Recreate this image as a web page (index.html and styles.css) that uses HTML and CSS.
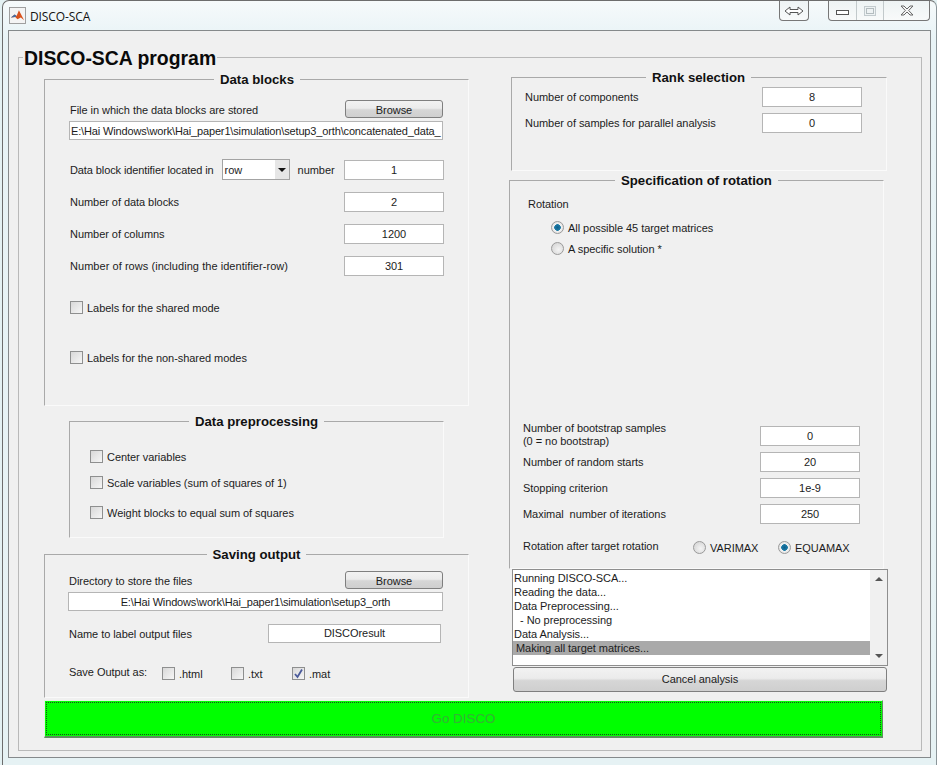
FILE: index.html
```html
<!DOCTYPE html>
<html>
<head>
    <title>DISCO-SCA</title>
    <link rel="stylesheet" href="styles.css">
</head>
<body>
<div class="window">
    <div class="titlebar">
        <svg class="app-icon" width="17" height="17" viewBox="0 0 18 18">
            <rect x="0.5" y="0.5" width="17" height="17" fill="#f4f4f4" stroke="#9a9a9a"/>
            <path d="M2 11 L6 8 L8 9.5 L10.5 3.5 L16 14 L12.5 11 L9 13 L6.5 10.5 Z" fill="#d9531e"/>
            <path d="M2 11 L6 8 L8 9.5 L6.5 10.5 Z" fill="#3f6fa8"/>
        </svg>
        <span class="app-name">DISCO-SCA</span>
        <div class="dock-btn">
            <svg width="20" height="10" viewBox="0 0 20 10"><path d="M1 5 L6 1 V3.5 H14 V1 L19 5 L14 9 V6.5 H6 V9 Z" fill="#fff" stroke="#555"/></svg>
        </div>
        <div class="caption-btns">
            <div class="cap cap-min"><span class="min-glyph"></span></div>
            <div class="cap cap-max"><span class="max-glyph"></span></div>
            <div class="cap cap-close">
                <svg width="14" height="11" viewBox="0 0 14 11"><path d="M1 1 H4 L7 4 L10 1 H13 L8.7 5.5 L13 10 H10 L7 7 L4 10 H1 L5.3 5.5 Z" fill="#f4f4f4" stroke="#666"/></svg>
            </div>
        </div>
    </div>

    <div class="client">
        <div class="main-panel">
            <div class="main-title">DISCO-SCA program</div>
            <div class="columns">
                <div class="col-left">
                    <div class="panel data-blocks">
                        <div class="panel-title">Data blocks</div>
                        <div class="row file-row">
                            <span class="grow low-label">File in which the data blocks are stored</span>
                            <div class="btn browse">Browse</div>
                        </div>
                        <div class="field field-left path">E:\Hai Windows\work\Hai_paper1\simulation\setup3_orth\concatenated_data_</div>
                        <div class="row id-row">
                            <span class="id-label">Data block identifier located in</span>
                            <div class="dropdown"><span>row</span><span class="drop-arrow"></span></div>
                            <span class="grow">number</span>
                            <div class="field num">1</div>
                        </div>
                        <div class="row gap-12">
                            <span class="grow">Number of data blocks</span>
                            <div class="field num">2</div>
                        </div>
                        <div class="row gap-12">
                            <span class="grow">Number of columns</span>
                            <div class="field num">1200</div>
                        </div>
                        <div class="row gap-12">
                            <span class="grow rows-label">Number of rows (including the identifier-row)</span>
                            <div class="field num">301</div>
                        </div>
                        <div class="check-row shared"><span class="check"></span><span>Labels for the shared mode</span></div>
                        <div class="check-row nonshared"><span class="check"></span><span>Labels for the non-shared modes</span></div>
                    </div>

                    <div class="panel preprocessing">
                        <div class="panel-title">Data preprocessing</div>
                        <div class="check-row pre-1"><span class="check"></span><span>Center variables</span></div>
                        <div class="check-row pre-2"><span class="check"></span><span>Scale variables (sum of squares of 1)</span></div>
                        <div class="check-row pre-3"><span class="check"></span><span>Weight blocks to equal sum of squares</span></div>
                    </div>

                    <div class="panel saving">
                        <div class="panel-title">Saving output</div>
                        <div class="row dir-row">
                            <span class="grow low-label">Directory to store the files</span>
                            <div class="btn browse">Browse</div>
                        </div>
                        <div class="field dir-path">E:\Hai Windows\work\Hai_paper1\simulation\setup3_orth</div>
                        <div class="row name-row">
                            <span class="grow">Name to label output files</span>
                            <div class="field name-field">DISCOresult</div>
                        </div>
                        <div class="row save-row">
                            <span class="save-label">Save Output as:</span>
                            <div class="check-row save-opt opt-html"><span class="check"></span><span>.html</span></div>
                            <div class="check-row save-opt opt-txt"><span class="check"></span><span>.txt</span></div>
                            <div class="check-row save-opt">
                                <span class="check">
                                    <svg width="11" height="11" viewBox="0 0 11 11"><path d="M2 6 L4.5 9 L9 1.5" fill="none" stroke="#4a5a9a" stroke-width="1.8"/></svg>
                                </span>
                                <span>.mat</span>
                            </div>
                        </div>
                    </div>
                </div>

                <div class="col-right">
                    <div class="panel rank">
                        <div class="panel-title">Rank selection</div>
                        <div class="row rank-1">
                            <span class="grow">Number of components</span>
                            <div class="field num">8</div>
                        </div>
                        <div class="row gap-6">
                            <span class="grow">Number of samples for parallel analysis</span>
                            <div class="field num">0</div>
                        </div>
                    </div>

                    <div class="panel rotation">
                        <div class="panel-title">Specification of rotation</div>
                        <div class="rotation-label">Rotation</div>
                        <div class="radio-row first"><span class="radio on"></span><span>All possible 45 target matrices</span></div>
                        <div class="radio-row second"><span class="radio"></span><span>A specific solution *</span></div>
                        <div class="row boot-row">
                            <span class="grow boot-label">Number of bootstrap samples<br>(0 = no bootstrap)</span>
                            <div class="field num">0</div>
                        </div>
                        <div class="row gap-6">
                            <span class="grow">Number of random starts</span>
                            <div class="field num">20</div>
                        </div>
                        <div class="row gap-6">
                            <span class="grow">Stopping criterion</span>
                            <div class="field num">1e-9</div>
                        </div>
                        <div class="row gap-6">
                            <span class="grow">Maximal&nbsp; number of iterations</span>
                            <div class="field num">250</div>
                        </div>
                        <div class="row after-row">
                            <span class="after-label">Rotation after target rotation</span>
                            <div class="radio-row varimax"><span class="radio"></span><span>VARIMAX</span></div>
                            <div class="radio-row"><span class="radio on"></span><span>EQUAMAX</span></div>
                        </div>
                    </div>

                    <div class="listbox">
                        <div class="list-lines">
                            <div>Running DISCO-SCA...</div>
                            <div>Reading the data...</div>
                            <div>Data Preprocessing...</div>
                            <div>&nbsp; - No preprocessing</div>
                            <div>Data Analysis...</div>
                            <div class="selected">Making all target matrices...</div>
                        </div>
                        <div class="scrollbar">
                            <span class="arrow-up"></span>
                            <span class="arrow-down"></span>
                        </div>
                    </div>
                    <div class="btn cancel">Cancel analysis</div>
                </div>
            </div>
            <div class="go-btn"><div class="go-inner">Go DISCO</div></div>
        </div>
    </div>
</div>
</body>
</html>
```

FILE: styles.css
```css
html, body {
    margin: 0;
    padding: 0;
}
body {
    width: 937px;
    height: 765px;
    overflow: hidden;
    background: #e4f1f3;
    font-family: "Liberation Sans", Arial, sans-serif;
    font-size: 11px;
    letter-spacing: -0.05px;
    color: #1c1c1c;
}
.window {
    box-sizing: border-box;
    width: 935px;
    height: 765px;
    margin-left: 2px;
    border-left: 1px solid #6d6d6d;
    border-top: 1px solid #6d6d6d;
    border-right: 1px solid #8b9599;
    border-radius: 7px 7px 0 0;
    background: linear-gradient(180deg, #f6fafb 0%, #e8f3f6 5%, #e6f2f4 100%);
    display: flex;
    flex-direction: column;
}

/* title bar */
.titlebar {
    height: 29px;
    display: flex;
    align-items: flex-start;
    flex-shrink: 0;
}
.app-icon {
    margin: 6px 0 0 6px;
}
.app-name {
    margin: 7px 0 0 4px;
    font-family: "Open Sans", sans-serif;
    font-size: 12px;
    letter-spacing: -0.1px;
    color: #111;
    width: 749px;
}
.dock-btn {
    box-sizing: border-box;
    width: 30px;
    height: 20px;
    border: 1px solid #777;
    border-top: 0;
    border-radius: 0 0 4px 4px;
    background: linear-gradient(180deg, #eef3f4, #f8fafa);
    display: flex;
    align-items: center;
    justify-content: center;
}
.caption-btns {
    margin-left: 19px;
    width: 102px;
    height: 20px;
    box-sizing: border-box;
    border: 1px solid #777;
    border-top: 0;
    border-radius: 0 0 4px 4px;
    display: flex;
    background: linear-gradient(180deg, #eef3f4, #f8fafa);
}
.cap {
    display: flex;
    align-items: center;
    justify-content: center;
    border-right: 1px solid #c2c9cb;
}
.cap-min { width: 27px; }
.cap-max { width: 26px; }
.cap-close { flex: 1; border-right: 0; }
.min-glyph {
    width: 11px;
    height: 3px;
    margin-top: 3px;
    border: 1px solid #555;
    background: #fff;
}
.max-glyph {
    width: 6px;
    height: 4px;
    border: 1px solid #b3bcbf;
    background: #eef2f3;
    box-shadow: 0 0 0 1px #eef2f3, 0 0 0 2px #c3cbce;
}

/* client area */
.client {
    box-sizing: border-box;
    width: 923px;
    height: 728px;
    margin-left: 5px;
    padding: 26px 8px 6px 9px;
    border: 1px solid #85898b;
    background: #f0f0f0;
}
.main-panel {
    box-sizing: border-box;
    height: 694px;
    border: 1px solid #b9b9b9;
}
.main-title {
    width: fit-content;
    margin: -13px 0 0 4px;
    padding: 0 1px;
    background: #f0f0f0;
    font-size: 19.4px;
    line-height: 26px;
    font-weight: bold;
    letter-spacing: 0;
    color: #0a0a0a;
}
.columns {
    display: flex;
    height: 627px;
}
.col-left {
    box-sizing: border-box;
    width: 490px;
    padding: 8px 0 0 25px;
}
.col-right {
    box-sizing: border-box;
    flex: 1;
    padding-top: 6px;
}

/* group panels */
.panel {
    box-sizing: border-box;
    border: 1px solid #fafafa;
    border-top-color: #a9a9a9;
    border-left-color: #a9a9a9;
}
.panel-title {
    width: fit-content;
    margin: -8px auto 0;
    padding: 0 6px;
    background: #f0f0f0;
    font-size: 13.2px;
    line-height: 16px;
    font-weight: bold;
    letter-spacing: 0;
    color: #111;
}
.rank .panel-title {
    margin-left: 121px;
}
.rotation .panel-title {
    margin-left: 92px;
}
.data-blocks {
    width: 425px;
    height: 327px;
    padding: 0 24px 0 25px;
}
.preprocessing {
    width: 375px;
    height: 117px;
    margin: 15px 0 0 25px;
    padding: 0 20px;
}
.saving {
    width: 425px;
    height: 144px;
    margin-top: 16px;
    padding: 0 24px 0 24px;
}
.rank {
    width: 376px;
    height: 94px;
    margin-left: 2px;
    padding: 0 24px 0 13px;
}
.rotation {
    width: 375px;
    height: 389px;
    margin-top: 9px;
    padding: 0 23px 0 13px;
}

/* rows and controls */
.row {
    display: flex;
    align-items: center;
}
.grow {
    flex: 1;
}
.gap-12 { margin-top: 12px; }
.gap-6 { margin-top: 6px; }
.field {
    box-sizing: border-box;
    height: 20px;
    border: 1px solid #b5b5b5;
    background: #fff;
    text-align: center;
    line-height: 18px;
    white-space: nowrap;
    overflow: hidden;
}
.field-left {
    text-align: left;
    padding-left: 2px;
}
.num {
    width: 100px;
}
.btn {
    box-sizing: border-box;
    border: 1px solid #7f7f7f;
    border-radius: 3px;
    background: linear-gradient(180deg, #f2f2f2 0%, #ebebeb 45%, #d6d6d6 55%, #cfcfcf 100%);
    text-align: center;
}
.browse {
    width: 98px;
    height: 18px;
    line-height: 18px;
}
.low-label {
    margin-top: 2px;
}
.file-row {
    margin-top: 12px;
    margin-right: 1px;
}
.path {
    width: 374px;
    height: 19px;
    line-height: 18px;
    margin-top: 3px;
    margin-left: -1px;
    padding-left: 1px;
    letter-spacing: -0.15px;
}
.id-row {
    margin-top: 19px;
}
.id-label {
    letter-spacing: -0.1px;
}
.rows-label {
    letter-spacing: 0.05px;
}
.dropdown {
    box-sizing: border-box;
    width: 68px;
    height: 21px;
    margin: 0 8px 0 8px;
    padding-left: 2px;
    border: 1px solid #a3a3a3;
    background: #fff;
    display: flex;
    align-items: center;
    justify-content: space-between;
}
.drop-arrow {
    width: 14px;
    height: 19px;
    background: #e6e6e6;
    position: relative;
}
.drop-arrow::after {
    content: "";
    position: absolute;
    left: 3px;
    top: 8px;
    border-left: 4px solid transparent;
    border-right: 4px solid transparent;
    border-top: 4px solid #111;
}
.check-row {
    display: flex;
    align-items: center;
    gap: 4px;
}
.check {
    box-sizing: border-box;
    width: 13px;
    height: 13px;
    border: 1px solid #8e8f8f;
    background: linear-gradient(135deg, #d8d8d8, #f6f6f6);
    display: inline-flex;
    align-items: center;
    justify-content: center;
    flex-shrink: 0;
}
.shared { margin-top: 25px; }
.nonshared { margin-top: 37px; }
.pre-1 { margin-top: 20px; }
.pre-2 { margin-top: 13px; }
.pre-3 { margin-top: 17px; }
.dir-row {
    margin-top: 8px;
    margin-right: 1px;
}
.dir-path {
    width: 375px;
    height: 19px;
    line-height: 18px;
    margin-top: 3px;
    margin-left: -1px;
    letter-spacing: -0.15px;
}
.name-row {
    margin-top: 13px;
    margin-right: 3px;
}
.name-field {
    width: 173px;
    height: 19px;
    line-height: 17px;
}
.save-row {
    margin-top: 21px;
}
.save-label {
    width: 93px;
}
.save-opt {
    margin-top: 3px;
    gap: 4px;
}
.opt-html {
    width: 69px;
}
.opt-txt {
    width: 61px;
}
.rank-1 {
    margin-top: 1px;
}
.rotation-label {
    margin: 8px 0 0 5px;
    line-height: 14px;
}
.radio-row {
    display: flex;
    align-items: center;
    gap: 4px;
}
.radio {
    box-sizing: border-box;
    width: 13px;
    height: 13px;
    border: 1px solid #9a9a9a;
    border-radius: 50%;
    background: radial-gradient(circle at 60% 60%, #f4f4f4, #cfcfcf);
    flex-shrink: 0;
}
.radio.on {
    background: radial-gradient(circle, #0f5f8c 0, #1d7ba6 3px, #f2f2f2 3.6px, #d4d4d4 100%);
}
.first {
    margin: 10px 0 0 28px;
}
.second {
    margin: 8px 0 0 28px;
}
.boot-row {
    margin-top: 171px;
}
.boot-label {
    line-height: 13px;
    margin: -5px 0 -3px;
}
.after-row {
    margin-top: 17px;
}
.after-label {
    width: 170px;
    margin-top: -3px;
}
.varimax {
    width: 85px;
}

/* output list */
.listbox {
    box-sizing: border-box;
    width: 376px;
    height: 97px;
    margin-left: 3px;
    border: 1px solid #8e8e8e;
    background: #fff;
    display: flex;
}
.list-lines {
    flex: 1;
    padding: 1px 0 0 1px;
    line-height: 14px;
}
.selected {
    background: #a9a9a9;
    padding-left: 3px;
    margin-left: -1px;
}
.scrollbar {
    width: 17px;
    background: #f0f0f0;
    display: flex;
    flex-direction: column;
    justify-content: space-between;
    align-items: center;
    padding: 7px 0;
    box-sizing: border-box;
}
.arrow-up {
    border-left: 4px solid transparent;
    border-right: 4px solid transparent;
    border-bottom: 4px solid #555;
}
.arrow-down {
    border-left: 4px solid transparent;
    border-right: 4px solid transparent;
    border-top: 4px solid #555;
}
.cancel {
    width: 374px;
    height: 25px;
    line-height: 23px;
    margin: 1px 0 0 4px;
}
.go-btn {
    box-sizing: border-box;
    width: 839px;
    height: 38px;
    margin: 2px 0 0 25px;
    border: 1px solid #dff5df;
    border-right-color: #5f8f5f;
    border-bottom: 2px solid #5f8f5f;
    background: #00ff00;
    padding: 1px;
}
.go-inner {
    height: 100%;
    box-sizing: border-box;
    border: 1px dotted #1c4d1c;
    text-align: center;
    font-size: 13.4px;
    line-height: 32px;
    letter-spacing: 0;
    color: #35b235;
}
```
